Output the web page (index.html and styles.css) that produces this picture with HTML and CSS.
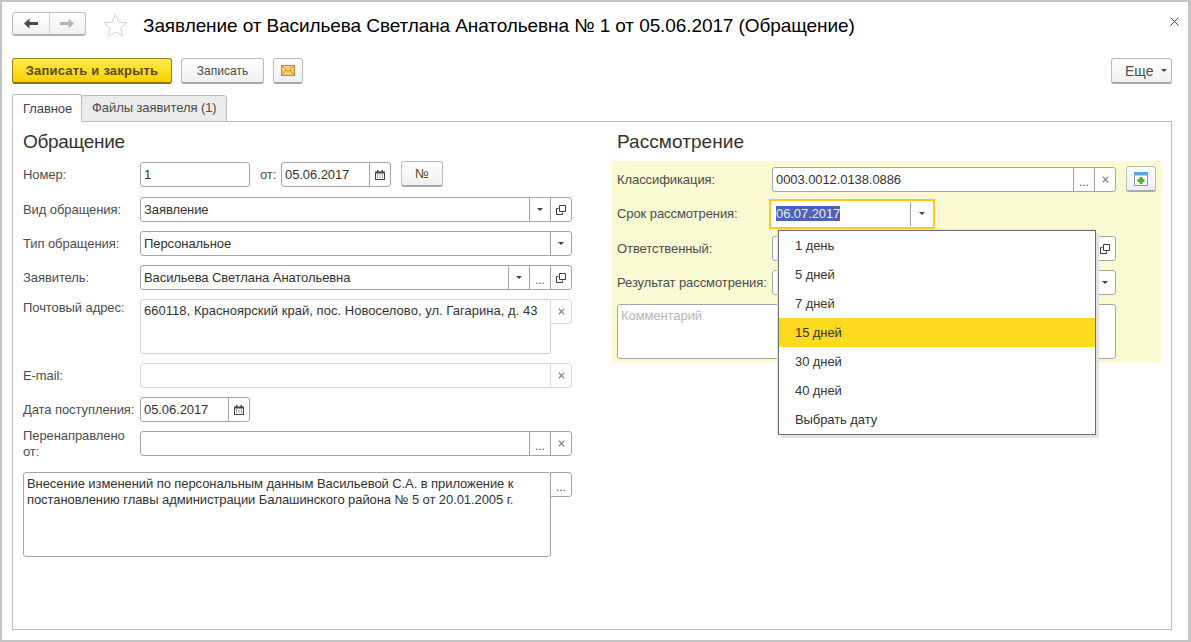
FILE: index.html
```html
<!DOCTYPE html>
<html lang="ru">
<head>
<meta charset="utf-8">
<title>Заявление</title>
<link rel="stylesheet" href="styles.css">
</head>
<body>
<svg class="defs" width="0" height="0" aria-hidden="true">
  <symbol id="i-open" viewBox="0 0 10 10"><path d="M3.500 .5h6v6h-6z M2.500 3.500H.5v6h6V7.500" fill="none" stroke="#3c3c3c"/></symbol>
  <symbol id="i-x" viewBox="0 0 7 7"><path d="M.7 .7l5.600 5.600M6.300 .7L.7 6.300" fill="none" stroke="#777" stroke-width="1.100"/></symbol>
  <symbol id="i-cal" viewBox="0 0 10 10"><path d="M0 1.500h10V10H0z" fill="#444"/><path d="M2 0h1.500v2H2zM6.500 0H8v2H6.500z" fill="#444"/><path d="M1 3.500h8V9H1z" fill="#fff"/><path d="M2 4.500h1v1H2zM4.500 4.500h1v1h-1zM7 4.500h1v1H7zM2 6.500h1v1H2zM4.500 6.500h1v1h-1zM7 6.500h1v1H7z" fill="#444"/></symbol>
</svg>
<div class="window">
  <header class="head">
    <div class="nav">
      <span class="nav-btn"><svg width="14" height="11" viewBox="0 0 14 11"><path d="M0 5.500L5.500 .5V4H14V7H5.500V10.500z" fill="#4a4a4a"/></svg></span>
      <span class="nav-btn"><svg width="14" height="11" viewBox="0 0 14 11"><path d="M14 5.500L8.500 .5V4H0V7H8.500V10.500z" fill="#b4b4b4"/></svg></span>
    </div>
    <svg class="star" width="25" height="24" viewBox="0 0 25 24"><path d="M12.500 1.500l3.200 7.600 8.200.7-6.200 5.400 1.900 8-7.100-4.300-7.100 4.300 1.900-8L1.100 9.800l8.200-.7z" fill="#fff" stroke="#d2d2d2"/></svg>
    <h1 class="title">Заявление от Васильева Светлана Анатольевна № 1 от 05.06.2017 (Обращение)</h1>
    <svg class="close" width="9" height="9" viewBox="0 0 9 9"><path d="M.5 .5l8 8M8.500 .5l-8 8" stroke="#444" fill="none"/></svg>
  </header>

  <div class="toolbar">
    <button class="btn btn-primary">Записать и закрыть</button>
    <button class="btn btn-save">Записать</button>
    <button class="btn btn-mail"><svg width="14" height="11" viewBox="0 0 14 11"><path d="M.5 .5h13v10H.5z" fill="#f8cf78" stroke="#c98a25"/><path d="M.5 .5L7 6.500l6.500-6M.5 10.500L5 5M13.500 10.500L9 5" fill="none" stroke="#c98a25"/></svg></button>
    <button class="btn btn-more">Еще<i class="caret"></i></button>
  </div>

  <nav class="tabs">
    <span class="tab tab-active">Главное</span>
    <span class="tab">Файлы заявителя (1)</span>
  </nav>

  <main class="panel">
    <section class="col col-left">
      <h2 class="section">Обращение</h2>
      <div class="row row-first">
        <label class="lbl">Номер:</label>
        <div class="field f-num"><span class="val">1</span></div>
        <span class="from">от:</span>
        <div class="field f-date"><span class="val">05.06.2017</span><span class="fb"><svg width="10" height="10"><use href="#i-cal"/></svg></span></div>
        <button class="btn btn-no">№</button>
      </div>
      <div class="row">
        <label class="lbl">Вид обращения:</label>
        <div class="field grow"><span class="val">Заявление</span><span class="fb"><i class="caret"></i></span><span class="fb"><svg width="10" height="10"><use href="#i-open"/></svg></span></div>
      </div>
      <div class="row">
        <label class="lbl">Тип обращения:</label>
        <div class="field grow"><span class="val">Персональное</span><span class="fb"><i class="caret"></i></span></div>
      </div>
      <div class="row">
        <label class="lbl">Заявитель:</label>
        <div class="field grow"><span class="val">Васильева Светлана Анатольевна</span><span class="fb"><i class="caret"></i></span><span class="fb dots">...</span><span class="fb"><svg width="10" height="10"><use href="#i-open"/></svg></span></div>
      </div>
      <div class="row row-area">
        <label class="lbl lbl-top">Почтовый адрес:</label>
        <div class="area area-addr">660118, Красноярский край, пос. Новоселово, ул. Гагарина, д. 43</div>
        <span class="side side-off"><svg width="7" height="7"><use href="#i-x"/></svg></span>
      </div>
      <div class="row">
        <label class="lbl">E-mail:</label>
        <div class="field grow off"><span class="val"></span><span class="fb"><svg width="7" height="7"><use href="#i-x"/></svg></span></div>
      </div>
      <div class="row">
        <label class="lbl">Дата поступления:</label>
        <div class="field f-num"><span class="val">05.06.2017</span><span class="fb"><svg width="10" height="10"><use href="#i-cal"/></svg></span></div>
      </div>
      <div class="row">
        <label class="lbl lbl-wrap">Перенаправлено от:</label>
        <div class="field grow"><span class="val"></span><span class="fb dots">...</span><span class="fb"><svg width="7" height="7"><use href="#i-x"/></svg></span></div>
      </div>
      <div class="row-note">
        <div class="area area-note">Внесение изменений по персональным данным Васильевой С.А. в приложение к постановлению главы администрации Балашинского района № 5 от 20.01.2005 г.</div>
        <span class="side dots">...</span>
      </div>
    </section>

    <section class="col col-right">
      <h2 class="section">Рассмотрение</h2>
      <div class="review">
        <div class="row">
          <label class="lbl lbl-r">Классификация:</label>
          <div class="field grow"><span class="val">0003.0012.0138.0886</span><span class="fb dots">...</span><span class="fb"><svg width="7" height="7"><use href="#i-x"/></svg></span></div>
          <button class="btn btn-add"><svg width="14" height="14" viewBox="0 0 14 14"><path d="M.5 .5h13v13H.5z" fill="#fff" stroke="#7f97a8"/><path d="M.5 .5h13v2.500H.5z" fill="#56a5e6" stroke="#56a5e6"/><path d="M5.500 5h3v2h2v3h-2v2h-3v-2h-2V7h2z" fill="#4fb81c"/></svg></button>
        </div>
        <div class="row row-focus">
          <label class="lbl lbl-r">Срок рассмотрения:</label>
          <div class="field f-focus"><span class="val"><span class="sel">06.07.2017</span></span><span class="fb"><i class="caret"></i></span></div>
        </div>
        <div class="row">
          <label class="lbl lbl-r">Ответственный:</label>
          <div class="field grow"><span class="val"></span><span class="fb"><svg width="10" height="10"><use href="#i-open"/></svg></span></div>
        </div>
        <div class="row">
          <label class="lbl lbl-r">Результат рассмотрения:</label>
          <div class="field grow"><span class="val"></span><span class="fb"><i class="caret"></i></span></div>
        </div>
        <div class="area area-comment"><span class="hint">Комментарий</span></div>
        <ul class="menu">
          <li>1 день</li>
          <li>5 дней</li>
          <li>7 дней</li>
          <li class="cur">15 дней</li>
          <li>30 дней</li>
          <li>40 дней</li>
          <li>Выбрать дату</li>
        </ul>
      </div>
    </section>
  </main>
</div>
</body>
</html>
```

FILE: styles.css
```css
* { box-sizing: border-box; }
html, body { margin: 0; padding: 0; }
body { width: 1191px; height: 642px; overflow: hidden; background: #fff; font: 13px/16px "Liberation Sans", Arial, sans-serif; letter-spacing: -.08px; color: #333; }
.defs { position: absolute; }
.window { width: 1191px; height: 642px; border: solid #c3c3c3; border-width: 2px 3px 2px 2px; padding: 10px 16px 10px 10px; display: flex; flex-direction: column; background: #fff; }

.head { display: flex; align-items: center; height: 26px; }
.nav { display: flex; width: 74px; height: 24px; border: 1px solid #bdbdbd; border-bottom: 2px solid #b0b0b0; border-radius: 3px; background: linear-gradient(#fff, #f0f0f0); margin-top: -2px; }
.nav-btn { flex: 1; display: flex; align-items: center; justify-content: center; }
.nav-btn + .nav-btn { border-left: 1px solid #d4d4d4; }
.star { margin-left: 17px; margin-right: 15px; }
.title { margin: 0; padding-top: 2px; font-weight: 400; font-size: 19px; line-height: 24px; color: #000; flex: 1; white-space: nowrap; letter-spacing: -.09px; }
.close { margin-right: -7px; margin-top: -8px; }

.toolbar { display: flex; gap: 9px; margin-top: 20px; height: 26px; }
.btn { font: 12px/16px "Liberation Sans", Arial, sans-serif; color: #4d4d4d; height: 26px; padding: 0; border: 1px solid #bcbcbc; border-bottom: 2px solid #a8a8a8; border-radius: 3px; background: linear-gradient(#fff, #efefef); display: inline-flex; align-items: center; justify-content: center; }
.btn-primary { width: 160px; font-size: 13px; letter-spacing: .2px; font-weight: 700; color: #5a4b00; border: 1px solid #9b8410; border-bottom: 2px solid #8c7608; background: linear-gradient(#ffe94f, #f6d000); }
.btn-save { width: 83px; }
.btn-mail { width: 30px; }
.btn-more { width: 61px; margin-left: auto; padding-left: 13px; font-size: 14px; justify-content: flex-start; }
.btn-more .caret { margin-left: 7px; }
.btn-no { width: 42px; margin-left: 10px; margin-top: -1px; color: #5a4b20; font-size: 13px; }
.btn-add { width: 30px; margin-left: 10px; margin-top: -1px; }

.caret { display: inline-block; width: 0; height: 0; border: solid transparent; border-width: 3px 3.5px 0; border-top-color: #444; }

.tabs { display: flex; height: 28px; margin-top: 10px; margin-bottom: -1px; align-items: flex-end; position: relative; z-index: 1; }
.tab { height: 27px; padding: 4px 10px 0; border: 1px solid #bdbdbd; border-radius: 3px 3px 0 0; background: #ebebeb; color: #4d4d4d; margin-left: -1px; white-space: nowrap; }
.tab:first-child { margin-left: 0; }
.tab-active { height: 28px; width: 70px; background: #fff; border-bottom-color: #fff; color: #444; padding-top: 6px; }
.tab + .tab { width: 146px; }

.panel { flex: 1; border: 1px solid #bdbdbd; display: flex; }
.col { width: 549px; display: flex; flex-direction: column; }
.col-left { margin-left: 10px; }
.col-right { margin-left: 40px; }
.section { margin: 9px 0 0; font-weight: 400; font-size: 19px; letter-spacing: -.3px; line-height: 22px; color: #333; height: 31px; flex: none; }
.col-right .section { margin-left: 5px; height: 30px; letter-spacing: .06px; }

.row { display: flex; align-items: center; height: 25px; margin-bottom: 9px; flex: none; }
.row-first { margin-bottom: 10px; }
.row-focus { margin-bottom: 10px; }
.row-area { height: 55px; align-items: flex-start; }
.lbl { width: 117px; flex: none; color: #4d4d4d; white-space: nowrap; }
.lbl-top { padding-top: 1px; }
.lbl-wrap { white-space: normal; width: 100px; margin-right: 17px; }
.lbl-r { width: 155px; margin-left: 5px; }
.row-focus .lbl-r { padding-top: 1px; }

.field { display: flex; height: 25px; border: 1px solid #a6a6a6; border-radius: 3px; background: #fff; color: #333; }
.grow { flex: 1; }
.f-num { width: 110px; }
.f-date { width: 110px; }
.f-focus { width: 162px; margin-left: -1px; height: 26px; outline: 2px solid #fcc91f; border-color: #fff; border-radius: 0; }
.f-focus .val { padding-left: 4px; line-height: 24px; }
.f-focus .fb { width: 22px; }
.from { margin: 0 5px 0 10px; width: 16px; color: #4d4d4d; }
.val { flex: 1; padding: 0 3px; line-height: 23px; white-space: nowrap; overflow: hidden; }
.fb { width: 21px; flex: none; border-left: 1px solid #a6a6a6; display: flex; align-items: center; justify-content: center; }
.dots { color: #555; align-items: flex-end; line-height: 18px; font-size: 12px; }
.off { border-color: #d9d9d9; }
.off .fb { border-color: #d9d9d9; }

.area { border: 1px solid #a6a6a6; border-radius: 3px; background: #fff; padding: 3px; color: #333; }
.area-addr { width: 411px; height: 55px; border-color: #d0d0d0; letter-spacing: .03px; }
.side { width: 22px; height: 25px; margin-left: -1px; border: 1px solid #a6a6a6; border-radius: 0 3px 3px 0; display: flex; justify-content: center; background: #fff; align-items: center; }
.side.dots { align-items: flex-end; }
.side-off { border-color: #d9d9d9; }
.row-note { display: flex; align-items: flex-start; margin-top: 7px; }
.area-note { width: 528px; height: 85px; }

.review { position: relative; height: 202px; background: #f9f9d2; padding-top: 6px; flex: none; }
.area-comment { height: 55px; margin: 0 45px 0 5px; }
.hint { color: #b5b5b5; }
.review .row .grow { max-width: 344px; }

.menu { position: absolute; left: 166px; top: 69px; width: 318px; margin: 0; padding: 0; list-style: none; background: #fff; border: 1px solid #6e6e6e; box-shadow: 3px 3px 0 #e3e3e3, -1px -1px 0 #e3e3e3; color: #333; }
.menu li { height: 29px; padding-left: 16px; line-height: 29px; }
.menu .cur { background: #fdd91f; }
.sel { background: #4e62b5; color: #e8eaf6; }
```
